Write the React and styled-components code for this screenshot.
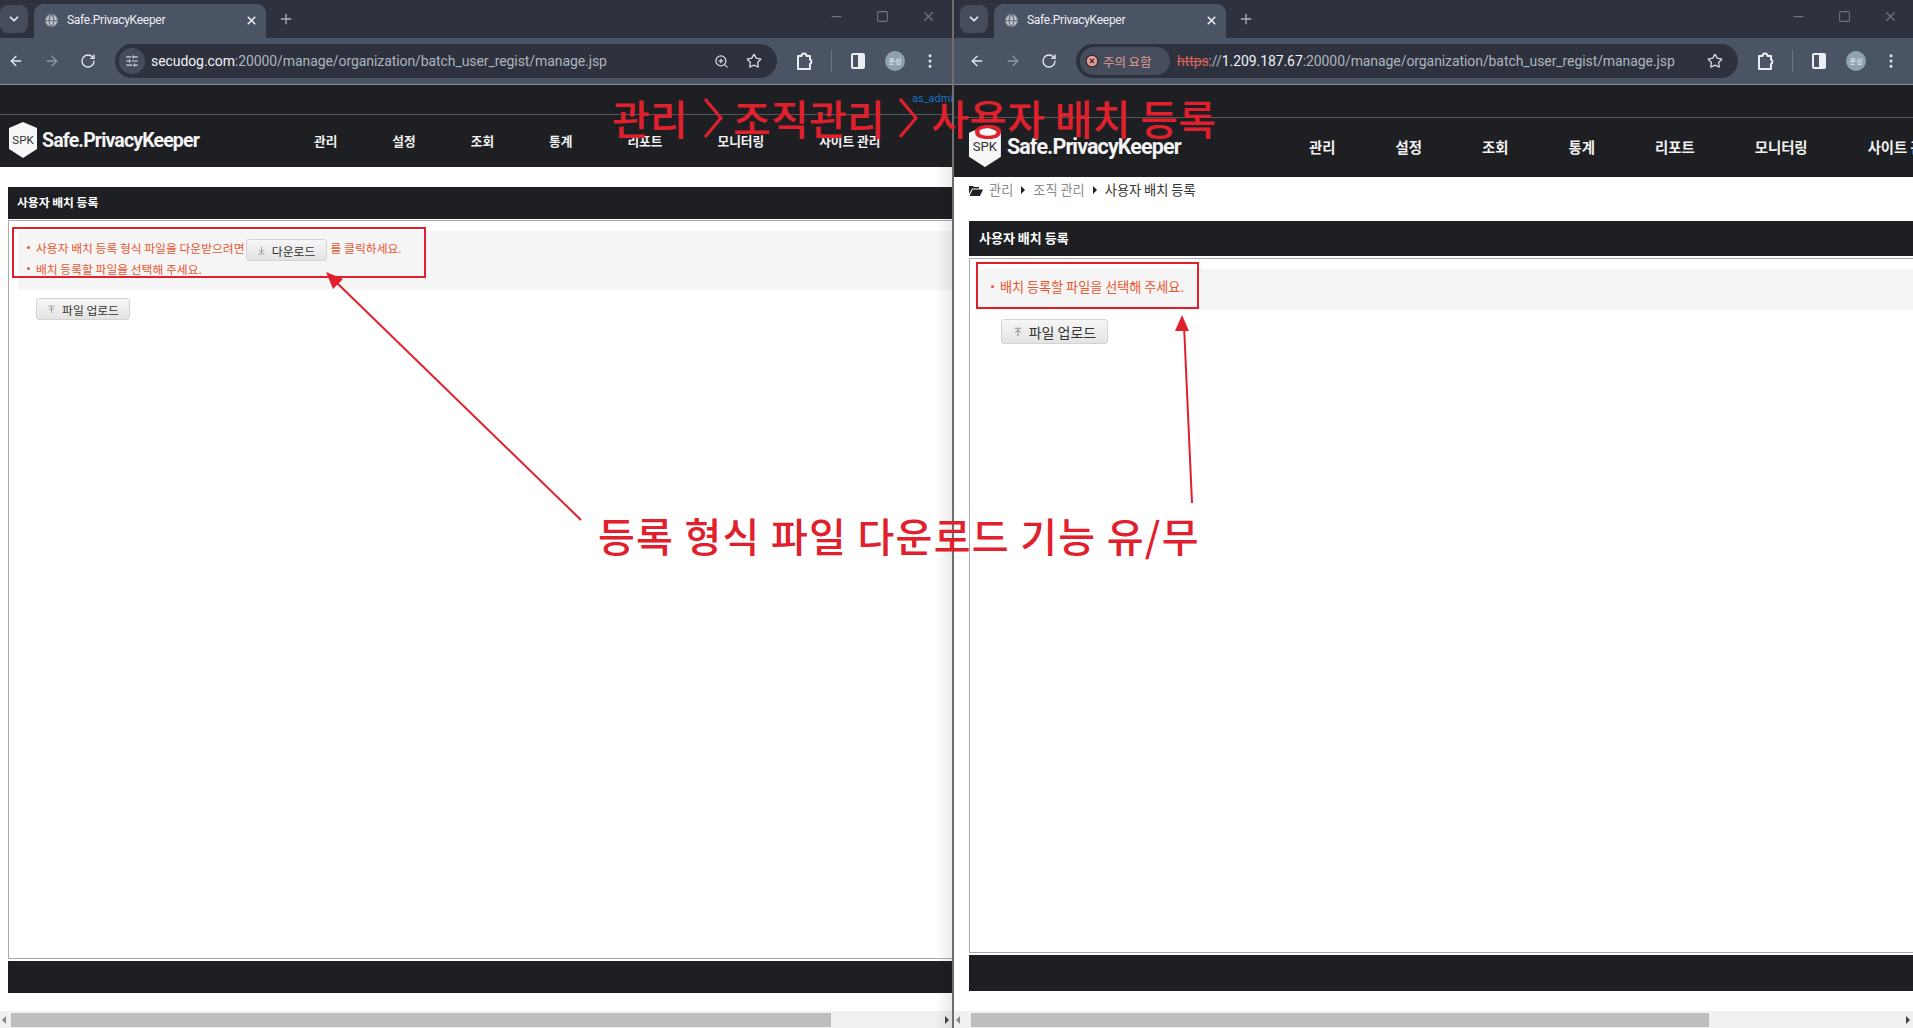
import React from "react";
import styled, { createGlobalStyle } from "styled-components";
import { ArrowLeft, ArrowRight, RotateCw, Star, ZoomIn, SlidersHorizontal, Plus, X, Minus, Square, ChevronDown, EllipsisVertical, Globe, CircleX, ArrowDownToLine, ArrowUpToLine } from "lucide-react";

const KR = `"Noto Sans CJK KR", "Noto Sans", sans-serif`;
const UI = `Roboto, "Noto Sans CJK KR", sans-serif`;

const Global = createGlobalStyle`
  html, body { margin: 0; padding: 0; background: #fff; overflow: hidden; }
  * { box-sizing: border-box; }
  body { font-family: ${KR}; }
`;

const Desktop = styled.div`
  position: relative;
  display: flex;
  width: 1913px;
  height: 1028px;
  overflow: hidden;
`;
const Window = styled.section`
  position: relative;
  display: flex;
  flex-direction: column;
  flex: none;
  width: ${p => p.$w}px;
  height: 1028px;
  overflow: hidden;
  background: #fff;
`;
const Divider = styled.div`
  flex: none;
  width: 2px;
  background: #6f6f6f;
`;
const TabStrip = styled.div`
  height: 38px;
  flex: none;
  display: flex;
  align-items: flex-end;
  background: #2d323e;
  padding-left: ${p => p.$pad}px;
  color: #c9ced8;
`;
const TabMenu = styled.div`
  width: 28px;
  height: 28px;
  margin-bottom: 5px;
  border-radius: 8px;
  background: #454d5c;
  display: flex;
  align-items: center;
  justify-content: center;
  color: #e6e9ef;
`;
const Tab = styled.div`
  width: 232px;
  height: 34px;
  margin-left: 6px;
  padding: 0 8px 2px 10px;
  border-radius: 9px 9px 0 0;
  background: #4b5465;
  display: flex;
  align-items: center;
  gap: 8px;
  font: 12px ${UI};
  letter-spacing: -0.28px;
  color: #eceef2;
`;
const TabTitle = styled.span`
  flex: 1;
`;
const NewTab = styled.div`
  margin: 0 0 11px 12px;
  display: flex;
  color: #aab1bd;
`;
const WinControls = styled.div`
  margin-left: auto;
  margin-right: ${p => p.$right}px;
  margin-bottom: 14px;
  display: flex;
  align-items: center;
  gap: 32px;
  color: #6d7482;
`;
const Toolbar = styled.div`
  height: 47px;
  flex: none;
  display: flex;
  align-items: center;
  background: #4b5465;
  border-bottom: 1px solid #8b8f97;
  padding-left: ${p => p.$pad}px;
  color: #e4e7ec;
`;
const NavIcons = styled.div`
  display: flex;
  gap: 20px;
  width: 107px;
  flex: none;
`;
const Omnibox = styled.div`
  width: 662px;
  height: 34px;
  flex: none;
  border-radius: 17px;
  background: #2d323e;
  display: flex;
  align-items: center;
  padding: 0 15px 0 ${p => p.$pad}px;
  color: #d5d9e0;
  font: 14px ${UI};
  letter-spacing: -0.08px;
`;
const SiteChip = styled.div`
  width: 26px;
  height: 26px;
  margin-right: 6px;
  border-radius: 50%;
  background: #454d5c;
  display: flex;
  align-items: center;
  justify-content: center;
`;
const WarnChip = styled.div`
  height: 28px;
  width: 90px;
  margin-right: 7px;
  padding-left: 5px;
  gap: 4px;
  border-radius: 14px;
  background: #454d5c;
  color: #e59b95;
  display: flex;
  align-items: center;
  font: 12.5px ${KR};
`;
const Host = styled.span`
  color: #f0f2f5;
`;
const Path = styled.span`
  color: #aeb4bf;
`;
const Struck = styled.span`
  color: #d9635c;
  text-decoration: line-through;
`;
const BoxEnd = styled.div`
  margin-left: auto;
  display: flex;
  align-items: center;
  gap: 17px;
`;
const Actions = styled.div`
  display: flex;
  align-items: center;
  margin-left: 17px;
  gap: 17px;
`;
const Sep = styled.div`
  width: 1px;
  height: 22px;
  background: #6d7482;
`;
const PanelIcon = styled.div`
  width: 14px;
  height: 16px;
  border: 2px solid #eceef2;
  border-radius: 2px;
  background: linear-gradient(90deg, transparent 50%, #eceef2 50%);
  margin: 0 2px;
`;
const Avatar = styled.div`
  width: 20px;
  height: 20px;
  border-radius: 50%;
  background: #8fa3ac;
  color: #eef;
  font: 7px/20px ${KR};
  text-align: center;
  margin: 0 -1px 0 1px;
`;
const Header = styled.header`
  flex: none;
  height: ${p => (p.$big ? 92 : 82)}px;
  background: #1e1f23;
  display: flex;
  flex-direction: column;
`;
const TopLine = styled.div`
  height: ${p => (p.$big ? 33 : 30)}px;
  flex: none;
  border-bottom: 1px solid #55565a;
  padding: 7px 0 0 912px;
  font: 11px Roboto, sans-serif;
  color: #1d6fc0;
  white-space: nowrap;
`;
const MainBar = styled.div`
  flex: 1;
  display: flex;
  align-items: center;
  padding: 0 0 2px ${p => (p.$big ? 15 : 9)}px;
`;
const Brand = styled.div`
  flex: none;
  width: ${p => (p.$big ? 340 : 305)}px;
  display: flex;
  align-items: center;
  gap: ${p => (p.$big ? 6 : 5)}px;
`;
const BrandName = styled.span`
  font: 700 ${p => (p.$big ? 21.5 : 19.5)}px Roboto, sans-serif;
  letter-spacing: ${p => (p.$big ? -0.9 : -0.85)}px;
  color: #f4f4f4;
  white-space: nowrap;
`;
const Menu = styled.nav`
  display: flex;
  gap: ${p => (p.$big ? 60 : 55)}px;
  white-space: nowrap;
`;
const MenuItem = styled.span`
  font: 700 ${p => (p.$big ? 14.4 : 12.7)}px ${KR};
  color: #f1f1f1;
`;
const Content = styled.main`
  flex: 1;
  min-height: 0;
  display: flex;
  flex-direction: column;
  padding: ${p => (p.$big ? "0 0 20px 15px" : "20px 0 18px 8px")};
`;
const Breadcrumb = styled.div`
  height: 44px;
  flex: none;
  padding-top: 2px;
  display: flex;
  align-items: flex-start;
  gap: 6px;
  font: 13.2px/22px ${KR};
  color: #8b8b8b;
`;
const FolderIcon = styled.svg`
  margin-top: 6px;
`;
const Caret = styled.i`
  width: 0;
  height: 0;
  margin: 7px 2px 0;
  border-left: 4px solid #222;
  border-top: 4px solid transparent;
  border-bottom: 4px solid transparent;
`;
const Current = styled.span`
  color: #333;
`;
const TitleBar = styled.div`
  flex: none;
  height: ${p => (p.$big ? 35 : 32)}px;
  background: #1e1f23;
  color: #fff;
  font: 700 ${p => (p.$big ? 13 : 11.8)}px/${p => (p.$big ? 33 : 30)}px ${KR};
  padding-left: ${p => (p.$big ? 10 : 9)}px;
`;
const Panel = styled.div`
  flex: 1;
  margin: ${p => (p.$big ? "2px 0" : "1px 0 2px")};
  border: 1px solid #a9a9a9;
  border-right: 0;
  padding-top: 10px;
`;
const Notice = styled.div`
  margin-left: 9px;
  padding: ${p => (p.$big ? "0 0 6px 12px" : "5px 0 0 9px")};
  height: ${p => (p.$big ? 41 : 59)}px;
  background: #f5f5f5;
  color: #e9552f;
  font-size: ${p => (p.$big ? 13.1 : 11.8)}px;
  display: ${p => (p.$big ? "flex" : "block")};
  align-items: center;
`;
const NoticeLine = styled.div`
  display: flex;
  align-items: center;
  min-height: 21px;
  white-space: nowrap;
`;
const Dot = styled.i`
  width: 3px;
  height: 3px;
  margin-right: 6px;
  border-radius: 50%;
  background: #e9552f;
`;
const GreyButton = styled.div`
  display: inline-flex;
  align-items: center;
  justify-content: center;
  gap: 6px;
  width: ${p => p.$w}px;
  height: ${p => p.$h}px;
  border: 1px solid #d4d4d4;
  border-radius: 3px;
  background: linear-gradient(#f6f6f6, #e4e4e4);
  color: #333;
  font-size: ${p => p.$fs}px;
  margin: ${p => p.$m};
`;
const Footer = styled.div`
  flex: none;
  height: ${p => (p.$big ? 36 : 32)}px;
  background: #1e1f23;
`;
const Scrollbar = styled.div`
  flex: none;
  height: 17px;
  background: #f0f0f0;
  display: flex;
  align-items: center;
  padding-left: ${p => p.$left}px;
  position: relative;
`;
const Thumb = styled.div`
  height: 14px;
  width: ${p => p.$w}px;
  background: #bdbdbd;
`;
const ArrowBtn = styled.i`
  position: absolute;
  top: 5px;
  ${p => (p.$right ? "right: 3px" : "left: 2px")};
  width: 0;
  height: 0;
  border-top: 4px solid transparent;
  border-bottom: 4px solid transparent;
  ${p => (p.$right ? "border-left: 4px solid #444" : "border-right: 4px solid #888")};
`;
const EdgeShade = styled.div`
  position: absolute;
  right: 0;
  top: 166px;
  bottom: 0;
  width: 16px;
  background: linear-gradient(90deg, rgba(0,0,0,0), rgba(0,0,0,0.08));
  pointer-events: none;
`;
const Callout = styled.div`
  position: absolute;
  left: ${p => p.$x}px;
  top: ${p => p.$y}px;
  width: ${p => p.$w}px;
  height: ${p => p.$h}px;
  border: 2px solid #e0202c;
`;
const Arrows = styled.svg`
  position: absolute;
  inset: 0;
`;
const BigLabel = styled.div`
  position: absolute;
  left: ${p => p.$x}px;
  top: ${p => p.$y}px;
  font: 500 ${p => p.$fs}px/1.2 ${KR};
  letter-spacing: ${p => p.$ls || 0}px;
  color: #e0202c;
  white-space: nowrap;
`;
const BigChevron = styled.svg`
  display: inline-block;
  margin: 0 ${p => p.$r}px 0 ${p => p.$l}px;
  vertical-align: -3px;
`;

const Chev = ({ l, r }) => (
  <BigChevron $l={l} $r={r} width="20" height="40" viewBox="0 0 20 40" fill="none" stroke="#e0202c" strokeWidth="3.2">
    <path d="M2 1 L18 20 L2 39" />
  </BigChevron>
);

const ExtensionIcon = () => (
  <svg width="20" height="20" viewBox="0 0 20 20" fill="none" stroke="#eceef2" strokeWidth="2" strokeLinejoin="round">
    <path d="M4 5h3.5a2.5 2.5 0 0 1 5 0H16v3.5a2.5 2.5 0 0 1 0 4.5V18H4z" />
  </svg>
);

const Logo = ({ big }) => {
  const s = big ? 1.14 : 1;
  return (
    <svg width={28 * s} height={36 * s} viewBox="0 0 28 36">
      <path d="M14 0 L28 6 V27 L14 36 L0 27 V6 Z" fill="#f6f6f6" />
      <text x="14" y="22" textAnchor="middle" fontSize="11.5" fontFamily="Roboto, sans-serif" fill="#333">SPK</text>
    </svg>
  );
};

const TabRow = ({ pad, right }) => (
  <TabStrip $pad={pad}>
    <TabMenu><ChevronDown size={14} strokeWidth={3} /></TabMenu>
    <Tab>
      <Globe size={15} color="#6d7482" fill="#c2c7d0" />
      <TabTitle>Safe.PrivacyKeeper</TabTitle>
      <X size={13} strokeWidth={3} color="#f2f2f2" />
    </Tab>
    <NewTab><Plus size={16} /></NewTab>
    <WinControls $right={right}>
      <Minus size={15} /><Square size={13} /><X size={15} />
    </WinControls>
  </TabStrip>
);

const Tools = ({ pad, boxPad, children, zoom }) => (
  <Toolbar $pad={pad}>
    <NavIcons>
      <ArrowLeft size={16} />
      <ArrowRight size={16} color="#8f96a3" />
      <RotateCw size={16} />
    </NavIcons>
    <Omnibox $pad={boxPad}>
      {children}
      <BoxEnd>
        {zoom && <ZoomIn size={15} />}
        <Star size={16} />
      </BoxEnd>
    </Omnibox>
    <Actions>
      <ExtensionIcon />
      <Sep />
      <PanelIcon />
      <Avatar>준성</Avatar>
      <EllipsisVertical size={18} />
    </Actions>
  </Toolbar>
);

const Top = ({ big, adm }) => (
  <Header $big={big}>
    <TopLine $big={big}>{adm && "as_admin"}</TopLine>
    <MainBar $big={big}>
      <Brand $big={big}>
        <Logo big={big} />
        <BrandName $big={big}>Safe.PrivacyKeeper</BrandName>
      </Brand>
      <Menu $big={big}>
        {["관리", "설정", "조회", "통계", "리포트", "모니터링", "사이트 관리"].map(m => (
          <MenuItem key={m} $big={big}>{m}</MenuItem>
        ))}
      </Menu>
    </MainBar>
  </Header>
);

export default function App() {
  return (
    <>
      <Global />
      <Desktop>
        <Window $w={952}>
          <TabRow pad={0} right={16} />
          <Tools pad={8} boxPad={4} zoom>
            <SiteChip><SlidersHorizontal size={14} /></SiteChip>
            <Host>secudog.com</Host><Path>:20000/manage/organization/batch_user_regist/manage.jsp</Path>
          </Tools>
          <Top adm />
          <Content>
            <TitleBar>사용자 배치 등록</TitleBar>
            <Panel>
              <Notice>
                <NoticeLine>
                  <Dot />사용자 배치 등록 형식 파일을 다운받으려면
                  <GreyButton $w={81} $h={22} $fs={11.8} $m="3px 4px -3px 1px">
                    <ArrowDownToLine size={9} color="#888" />다운로드
                  </GreyButton>
                  를 클릭하세요.
                </NoticeLine>
                <NoticeLine><Dot />배치 등록할 파일을 선택해 주세요.</NoticeLine>
              </Notice>
              <GreyButton $w={94} $h={22} $fs={11.8} $m="8px 0 0 27px">
                <ArrowUpToLine size={9} color="#888" />파일 업로드
              </GreyButton>
            </Panel>
            <Footer />
          </Content>
          <Scrollbar $left={11}>
            <ArrowBtn />
            <Thumb $w={820} />
            <ArrowBtn $right />
          </Scrollbar>
          <EdgeShade />
        </Window>
        <Divider />
        <Window $w={959}>
          <TabRow pad={6} right={15} />
          <Tools pad={15} boxPad={4}>
            <WarnChip><CircleX size={14} color="#3a2a2a" fill="#e59b95" />주의 요함</WarnChip>
            <Struck>https</Struck><Path>://</Path><Host>1.209.187.67</Host><Path>:20000/manage/organization/batch_user_regist/manage.jsp</Path>
          </Tools>
          <Top big />
          <Content $big>
            <Breadcrumb>
              <FolderIcon width="14" height="11" viewBox="0 0 14 11" fill="#222">
                <path d="M0 1h4l1 1h5v1.5H3L0 9z" />
                <path d="M3.5 4.5H14L11 11H0.5z" />
              </FolderIcon>
              관리<Caret />조직 관리<Caret /><Current>사용자 배치 등록</Current>
            </Breadcrumb>
            <TitleBar $big>사용자 배치 등록</TitleBar>
            <Panel $big>
              <Notice $big>
                <NoticeLine><Dot />배치 등록할 파일을 선택해 주세요.</NoticeLine>
              </Notice>
              <GreyButton $w={107} $h={25} $fs={14} $m="9px 0 0 31px">
                <ArrowUpToLine size={10} color="#777" />파일 업로드
              </GreyButton>
            </Panel>
            <Footer $big />
          </Content>
          <Scrollbar $left={17}>
            <ArrowBtn />
            <Thumb $w={738} />
            <ArrowBtn $right />
          </Scrollbar>
        </Window>

        <Callout $x={12} $y={227} $w={414} $h={51} />
        <Callout $x={976} $y={262} $w={223} $h={47} />
        <Arrows width="1913" height="1028" viewBox="0 0 1913 1028">
          <line x1="581" y1="520" x2="336" y2="282" stroke="#e0202c" strokeWidth="2" />
          <polygon points="326,272 343,279 333,289" fill="#e0202c" />
          <line x1="1192" y1="503" x2="1184" y2="325" stroke="#e0202c" strokeWidth="2" />
          <polygon points="1182,315 1189,331 1175,331" fill="#e0202c" />
        </Arrows>
        <BigLabel $x={612} $y={93} $fs={41} $ls={0.3}>
          관리<Chev l={15} r={10} />조직관리<Chev l={13} r={13} />사용자 배치 등록
        </BigLabel>
        <BigLabel $x={598} $y={511} $fs={40} $ls={1.3}>등록 형식 파일 다운로드 기능 유/무</BigLabel>
      </Desktop>
    </>
  );
}
